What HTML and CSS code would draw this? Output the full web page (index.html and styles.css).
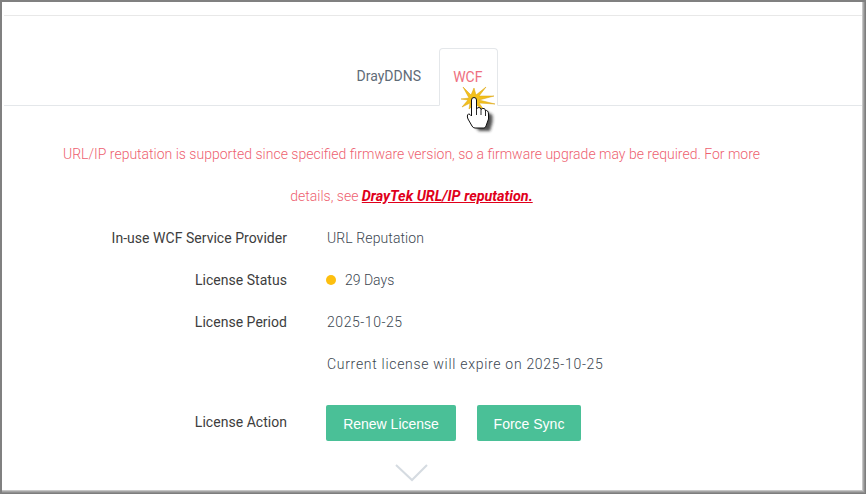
FILE: index.html
```html
<!DOCTYPE html>
<html lang="en">
<head>
<meta charset="utf-8">
<title>WCF</title>
<link rel="stylesheet" href="styles.css">
</head>
<body>
<div class="frame">
  <div class="page">
    <div class="top-rule"></div>
    <nav class="tabs">
      <span class="tab">DrayDDNS</span>
      <span class="tab tab-active">WCF</span>
    </nav>
    <div class="notice">
      <p>URL/IP reputation is supported since specified firmware version, so a firmware upgrade may be required. For more</p>
      <p>details, see <a class="notice-link" href="#">DrayTek URL/IP reputation.</a></p>
    </div>
    <dl class="rows">
      <div class="row"><dt>In-use WCF Service Provider</dt><dd>URL Reputation</dd></div>
      <div class="row"><dt>License Status</dt><dd class="status"><i class="dot"></i>29 Days</dd></div>
      <div class="row"><dt>License Period</dt><dd class="date">2025-10-25</dd></div>
      <div class="row"><dt></dt><dd class="wide">Current license will expire on 2025-10-25</dd></div>
      <div class="row row-action"><dt>License Action</dt><dd class="actions"><button class="btn btn-renew">Renew License</button><button class="btn btn-sync">Force Sync</button></dd></div>
    </dl>
    <svg class="chevron" width="34" height="18" viewBox="0 0 34 18"><path d="M2 1 L18 16 L33 1" fill="none" stroke="#d5dbe1" stroke-width="2"/></svg>
    <svg class="cursor" width="46" height="50" viewBox="0 0 46 50">
      <defs><filter id="s" x="-40%" y="-40%" width="180%" height="180%"><feGaussianBlur stdDeviation="1.800"/></filter></defs>
      <path d="M4 2 L12 10 L15 3 L17 10 L27 2 L20 11 L35 11 L20 15 L36 19 L20 18 L25 25 L16 19 L10 24 L11 18 L3 22 L9 15 L2 14 L10 13 Z" fill="#f3c01c" stroke="#d9a00c" stroke-width=".5"/>
      <path d="M12.500 15 V24 L22 23 L29.500 27 V34 L27 43 H16 L9 34 L8.500 30 L12.500 31 Z" fill="#222" opacity=".8" filter="url(#s)" transform="translate(4 3)"/>
      <path d="M12.500 15 Q12.500 12.500 15 12.500 Q17.500 12.500 17.500 15 V24 Q18 22.500 20 22.500 Q22 22.500 22 24.500 Q23 23 25 23.500 Q26.500 24 26.500 26 Q27.500 25 28.500 26 Q29.500 27 29.500 29 V34 L27 41 Q26.500 43 25 43 H16 Q14 43 13 41 L9 34 Q8 32 8.500 30 Q9.500 28 11 29.500 L12.500 31 Z" fill="#fff" stroke="#111" stroke-width="1"/>
      <path d="M17.500 24 V30 M22 24.500 V30 M26.500 26 V31" stroke="#111" stroke-width=".9" fill="none"/>
    </svg>
  </div>
</div>
</body>
</html>
```
FILE: styles.css
```css
* { box-sizing: border-box; }
html, body { margin: 0; padding: 0; }
body { width: 866px; height: 494px; overflow: hidden; background: #fff; font-family: Roboto, sans-serif; }
.frame {
  width: 866px; height: 494px;
  border-style: solid;
  border-width: 2px 0 0 2px;
  border-color: #808080;
  padding: 0 4px 4px 0;
  background: #fff;
  box-shadow: inset -1px -1px 0 #7d7d7d, inset -2px -2px 0 #8f8f8f, inset -3px -3px 0 #a6a6a6, inset -4px -4px 0 #c6c6c6;
  overflow: hidden;
}
.page { position: relative; height: 100%; padding-top: 13px; }
.top-rule { height: 1px; margin-left: 2px; background: #e8e8e8; }
.tabs {
  display: flex; justify-content: center;
  height: 90px; margin-left: 2px; padding: 32px 30px 0 0;
  border-bottom: 1px solid #e4e7ea;
}
.tab {
  font-size: 14px; line-height: 20px; color: #5f6b77;
  padding: 18px 18px 0;
  height: 58px;
  letter-spacing: .03px;
}
.tab-active {
  color: #ee6f80;
  background: #fff;
  border: 1px solid #e4e7ea;
  border-bottom-color: #fff;
  border-radius: 4px 4px 0 0;
  padding: 18px 14px 0 13px;
  margin-left: 0;
}
.notice { margin: 27px 0 0; font-size: 14px; font-weight: 300; color: #ee5f70; text-align: center; width: 819px; }
.notice p { margin: 0; line-height: 42px; height: 42px; }
.notice-link { font-size: 14.4px; font-weight: 700; font-style: italic; color: #e0001b; text-decoration: underline; }
.rows { margin: 0; padding: 0; }
.row { display: flex; height: 42px; align-items: center; font-size: 14px; color: #444; }
.row dt { width: 285px; padding-right: 0; text-align: right; color: #3d3d3d; font-weight: 400; letter-spacing: .03px; }
.row dd { margin: 0 0 0 40px; font-weight: 300; letter-spacing: .1px; color: #3b4650; }
.row .date { letter-spacing: .55px; }
.row .wide { letter-spacing: .7px; }
.row-action { height: 36px; margin-top: 20px; align-items: flex-start; }
.row-action dt { line-height: 34px; }
.status { display: flex; align-items: center; }
.row .status { margin-left: 39px; letter-spacing: 0; }
.dot { width: 10px; height: 10px; border-radius: 50%; background: #fdbf0f; margin-right: 9px; }
.row .actions { display: flex; gap: 21px; margin-left: 39px; }
.btn {
  height: 36px; border: 0; border-radius: 2px; background: #4ac097; color: #fff;
  font-family: "Liberation Sans", sans-serif; font-size: 14px; padding: 1px 0 0;
}
.btn-renew { width: 130px; }
.btn-sync { width: 104px; }
.chevron { position: absolute; left: 392px; top: 462px; }
.cursor { position: absolute; left: 457px; top: 83px; }
```
